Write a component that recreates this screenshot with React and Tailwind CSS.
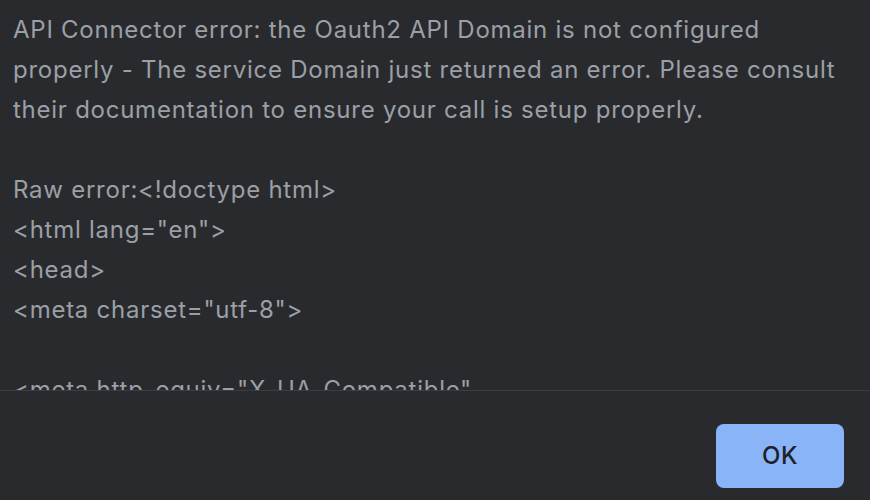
export default function App() {
  const lines = [
    "API Connector error: the Oauth2 API Domain is not configured",
    "properly - The service Domain just returned an error. Please consult",
    "their documentation to ensure your call is setup properly.",
    "",
    "Raw error:<!doctype html>",
    '<html lang="en">',
    "<head>",
    '<meta charset="utf-8">',
    "",
    '<meta http-equiv="X-UA-Compatible"',
  ];

  return (
    <div className="w-[870px] h-[500px] bg-[#292a2d] flex flex-col font-['Inter','Liberation_Sans',sans-serif]">
      <div className="h-[390px] overflow-hidden px-[13px] pt-[10px] text-[24px] leading-[40px] tracking-[0.75px] text-[#9aa0a6]">
        {lines.map((line, i) => (
          <div key={i} className="h-[40px] whitespace-pre">
            {line}
          </div>
        ))}
      </div>
      <div className="h-px bg-[#3c3d41]" />
      <div className="flex-1 flex justify-end items-start pt-[33px] pr-[26px]">
        <button className="w-[128px] h-[64px] rounded-[8px] bg-[#8ab4f8] text-[#202124] text-[24px] tracking-[0.5px] font-medium">
          OK
        </button>
      </div>
    </div>
  );
}
